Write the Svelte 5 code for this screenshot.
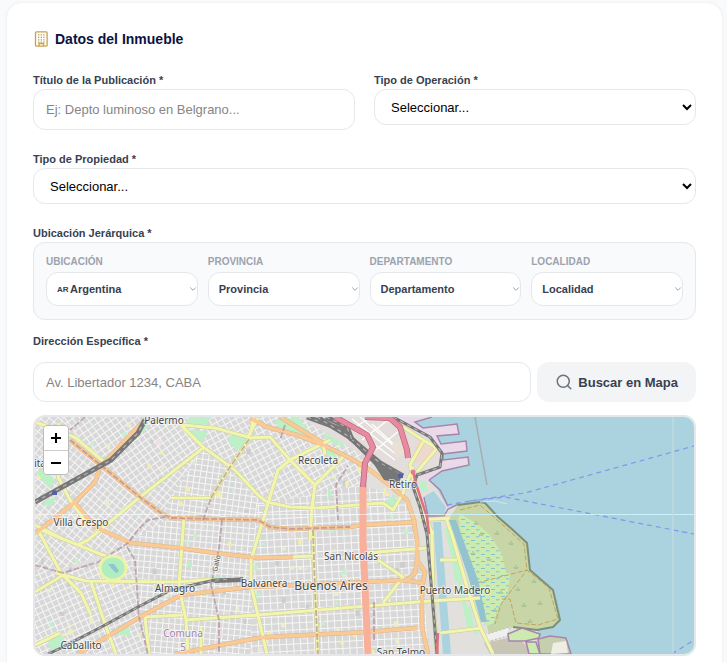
<script>
  let titulo = $state('');
  let operacion = $state('');
  let propiedad = $state('');
  let direccion = $state('');

  const niveles = [
    { id: 'pais', label: 'UBICACIÓN', placeholder: 'Argentina', prefix: 'AR' },
    { id: 'provincia', label: 'PROVINCIA', placeholder: 'Provincia' },
    { id: 'departamento', label: 'DEPARTAMENTO', placeholder: 'Departamento' },
    { id: 'localidad', label: 'LOCALIDAD', placeholder: 'Localidad' }
  ];

  // street grids, one per neighbourhood: size of a block and its angle
  const grids = [
    { id: 'villa-crespo', angle: 40, size: 6, area: '35,417 183,417 258,500 258,520 171,518 131,543 35,580' },
    { id: 'palermo', angle: 55, size: 6, area: '60,417 183,417 203,448 141,498 100,462' },
    { id: 'caballito', angle: -24, size: 6, area: '35,570 63,573 98,560 128,543 140,617 150,654 35,654' },
    { id: 'almagro', angle: 5, size: 6, area: '171,518 258,520 258,654 145,654 140,617 128,543' },
    { id: 'norte', angle: 62, size: 6, area: '183,417 305,417 373,462 363,485 363,505 290,507 258,495 203,448' },
    { id: 'recoleta', angle: 8, size: 6, area: '203,448 228,470 258,497 290,507 363,505 363,530 161,517 171,498' },
    { id: 'centro', angle: -3, size: 7, area: '257,505 363,485 407,500 417,530 430,654 250,654' }
  ];

  const parks = [
    '189,417 212,417 204,426 186,426', '184,430 208,431 203,441 196,441',
    '230,435 246,437 246,448 236,450 229,443', '275,420 298,417 316,440 298,434 278,428',
    '322,420 342,436 345,448 326,440', '318,448 340,450 334,460', '36,472 46,468 56,483 48,487',
    '45,500 56,497 52,506 44,505', '47,638 61,632 64,646 50,650', '118,630 128,623 131,636 117,635',
    '383,503 395,494 397,506 392,509', '140,428 148,424 143,434', '104,456 115,454 109,460',
    '418,478 425,475 428,493 421,490', '452,560 460,556 463,577 455,583', '464,610 471,606 474,627 467,627',
    '328,488 332,494 328,500', '188,563 192,560 192,567 187,567', '213,576 225,577 225,580 213,580'
  ];

  const yellow = [
    '35,422 58,430 76,438 103,461', '58,423 68,447 58,477 70,500 88,525', '203,448 140,497 88,540 78,545',
    '181,425 203,447 235,470 258,495 267,502 290,507 317,508 383,503 393,510 403,493 413,467',
    '183,425 215,428 248,437 258,418', '171,498 211,498 228,470 250,438 270,437 290,460 315,485 312,507 310,540',
    '330,440 290,460 278,470 267,507 257,540 251,560 251,585 267,654', '343,457 315,485',
    '184,516 183,530 179,587 186,620 188,654', '56,573 86,581 178,582 215,579', '91,582 106,627 116,654',
    '38,530 61,573 81,593 91,615', '35,592 65,574', '41,530 58,537 78,545 108,557',
    '145,617 183,615', '185,620 258,615 367,606 430,601 480,598', '201,627 201,654', '35,525 61,538',
    '35,645 60,633', '365,553 427,548', '378,560 403,577 383,603', '293,557 313,556',
    '250,435 254,417', '423,442 410,465 415,485 425,515 433,535', '397,423 423,440 437,448 417,472',
    '420,520 450,518', '432,530 433,600 437,654', '446,518 452,535 467,587 480,627 493,654',
    '440,560 457,560', '440,633 482,628', '145,617 149,654', '313,530 315,590 318,654', '323,443 325,455'
  ];

  const orange = [
    '145,420 135,430 100,467 95,482 75,502 36,533', '75,503 95,527 131,543 180,548 215,553 258,558 293,557',
    '250,418 267,427 297,435 323,445 350,458 370,470 393,488 407,500 413,517 417,540 417,560 425,572 423,583 403,580',
    '280,417 323,443', '417,560 415,573 407,580 367,582 250,587 181,595 140,617 78,654',
    '175,654 258,638 267,637 367,632 417,628', '422,583 422,627 428,654',
    '70,440 103,467 141,498 161,513 171,518 258,520 270,527 290,529 350,527 363,525 417,522'
  ];

  // barrio limits drawn over the avenues
  const limits = [
    '70,440 103,467 141,498 161,513 171,518 258,520 270,527 290,529 350,527',
    '35,565 63,573 98,562 128,543 138,530 148,520 165,517', '211,498 228,470 250,438',
    '203,520 211,498', '222,520 219,548 211,585 219,620 219,654', '127,547 135,560 139,617 148,654',
    '313,530 315,590 318,654', '338,520 336,485 348,466', '85,417 70,430', '285,425 280,440', '374,640 374,600'
  ];

  const motorways = [
    '335,417 367,435 373,447 365,463 363,487', '365,417 390,418 400,427 407,450 408,458'
  ];

  const rails = [
    '35,502 111,460 138,433 145,420', '307,417 343,430 373,460 393,480', '317,417 348,436 380,463 403,476',
    '326,417 347,427 352,440'
  ];

  const thinRails = [
    '48,654 61,648 105,625 138,607 171,590 215,580 243,579',
    '393,417 430,437 442,453 440,467 417,475 413,487 420,507 427,534 437,654'
  ];

  const places = [
    { x: 164, y: 424, name: 'Palermo' }, { x: 318, y: 464, name: 'Recoleta' },
    { x: 403, y: 488, name: 'Retiro' }, { x: 81, y: 526, name: 'Villa Crespo' },
    { x: 175, y: 592, name: 'Almagro' }, { x: 264, y: 587, name: 'Balvanera' },
    { x: 351, y: 560, name: 'San Nicolás' }, { x: 455, y: 594, name: 'Puerto Madero' },
    { x: 81, y: 649, name: 'Caballito' }, { x: 401, y: 656, name: 'San Telmo' },
    { x: 38, y: 467, name: 'rita' }
  ];

  const bushes = [
    [476, 525], [497, 535], [511, 545], [473, 555], [516, 569], [534, 583], [518, 591],
    [524, 607], [540, 605], [530, 623], [489, 561], [501, 594], [495, 612], [481, 536]
  ];

  // small plazas and buildings scattered between the streets
  const tones = ['#f5efa9', '#c4f2cf', '#f1e0e0', '#eeeecb', '#ccc'];
  let seed = 17;
  function next() {
    seed = (seed * 16807) % 2147483647;
    return seed / 2147483647;
  }
  const blocks = Array.from({ length: 170 }, () => ({
    x: 37 + next() * 372,
    y: 419 + next() * 232,
    w: 2 + next() * 3,
    h: 2 + next() * 4,
    fill: tones[Math.floor(next() * tones.length)]
  }));
</script>

<main class="card">
  <h2>
    <svg class="building" viewBox="0 0 16 16" aria-hidden="true">
      <rect x="2.5" y="0.8" width="11.6" height="14.4" rx="1" />
      <path d="M6 15v-2.5h4.6V15" />
      <path class="windows" d="M5 3.8h7.5M5 6.3h7.5M5 8.8h7.5M5 11.2h7.5" />
    </svg>
    Datos del Inmueble
  </h2>

  <div class="row">
    <div class="field">
      <label for="titulo">Título de la Publicación *</label>
      <input id="titulo" type="text" placeholder="Ej: Depto luminoso en Belgrano..." bind:value={titulo} />
    </div>
    <div class="field">
      <label for="operacion">Tipo de Operación *</label>
      <select id="operacion" bind:value={operacion}>
        <option value="">Seleccionar...</option>
        <option value="venta">Venta</option>
        <option value="alquiler">Alquiler</option>
      </select>
    </div>
  </div>

  <div class="field type">
    <label for="propiedad">Tipo de Propiedad *</label>
    <select id="propiedad" bind:value={propiedad}>
      <option value="">Seleccionar...</option>
      <option value="casa">Casa</option>
      <option value="depto">Departamento</option>
    </select>
  </div>

  <fieldset>
    <legend>Ubicación Jerárquica *</legend>
    <div class="levels">
      {#each niveles as nivel (nivel.id)}
        <div class="level">
          <label for={nivel.id}>{nivel.label}</label>
          <div class="picker" class:prefixed={nivel.prefix}>
            <select id={nivel.id}>
              <option>{nivel.placeholder}</option>
            </select>
            {#if nivel.prefix}<span>{nivel.prefix}</span>{/if}
            <svg viewBox="0 0 8 8" aria-hidden="true"><path d="M1.2 2.5L4 5.3l2.800-2.800" /></svg>
          </div>
        </div>
      {/each}
    </div>
  </fieldset>

  <div class="address">
    <label for="direccion">Dirección Específica *</label>
    <div class="search">
      <input id="direccion" type="text" placeholder="Av. Libertador 1234, CABA" bind:value={direccion} />
      <button type="button" class="find">
        <svg viewBox="0 0 24 24" aria-hidden="true"><circle cx="11" cy="11" r="8" /><path d="M21 21l-4.350-4.350" /></svg>
        Buscar en Mapa
      </button>
    </div>
  </div>

  <div class="map">
    <svg viewBox="35 417 659 237" preserveAspectRatio="xMidYMid slice" role="img" aria-label="Mapa de Buenos Aires">
      <defs>
        {#each grids as g (g.id)}
          <pattern id={g.id} width={g.size} height={g.size} patternUnits="userSpaceOnUse" patternTransform="rotate({g.angle})">
            <rect width={g.size} height={g.size} fill="#d8d8d8" />
            <path d="M0 0.500H{g.size}M0.500 0V{g.size}" stroke="#f6f6f6" />
          </pattern>
        {/each}
        <pattern id="marsh" width="10" height="7" patternUnits="userSpaceOnUse">
          <rect width="10" height="7" fill="#cdebb0" />
          <path d="M1 1.500h4M6 4.800h3.500" stroke="#7cc4d6" />
        </pattern>
      </defs>

      <rect x="35" y="417" width="659" height="237" fill="#e2e0dc" />
      {#each grids as g (g.id)}
        <polygon points={g.area} fill="url(#{g.id})" />
      {/each}
      {#each blocks as b}
        <rect x={b.x} y={b.y} width={b.w} height={b.h} fill={b.fill} />
      {/each}
      {#each parks as points}
        <polygon {points} fill="#bdf0c6" />
      {/each}

      <!-- Retiro yards and the port -->
      <polygon points="300,417 430,417 440,440 438,470 415,480 370,460" fill="#e3dedb" />
      <path class="yard" d="M345 422l50 38M352 419l45 36M360 417l42 36M372 424l28 26M350 430l20-12M362 440l26-20M376 450l24-20" />
      <polygon points="395,417 475,417 470,462 443,472 432,482 415,480 440,465 442,450 425,434" fill="#ead9e8" />
      <polygon points="418,436 440,449 427,463 412,462" fill="#f0d9cc" />
      <polygon points="392,444 404,438 406,455 396,458" fill="#eae0d4" />

      <!-- river -->
      <path
        class="water"
        d="M432 417L415 422 423 428 457 424 459 434 437 436 441 444 466 441 467 451 443 454 443 460 468 457 469 465 442 471 429 480 437 489 447 507 458 505 480 502 485 503 498 517 513 530 527 543 530 570 553 590 560 620 553 627 537 630 540 637 567 637 571 656H700V410H432z"
      />
      <path
        class="pier"
        d="M432 417L415 422 423 428 457 424 459 434 437 436 441 444 466 441 467 451 443 454 443 460 468 457 469 465 442 471 429 480"
      />
      <path class="water" d="M425 496l9-5 12 16-2 8-16 1z" />
      <path class="pier" d="M429 480l11 10 8 16M424 497l4 19h16l4-7 11-5" />
      <path class="water" d="M433 522h8l10 132h-8z" />

      <!-- reserva ecológica -->
      <path
        d="M449 519L458 505 480 502 485 503 498 517 513 530 527 543 530 570 553 590 560 620 553 627 537 630 513 627 489 634 474 575z"
        fill="#c8d5a7"
      />
      <path d="M458 513l18 10 14 12 12 19 3 15 5 5-2 18-10 17-5 15-8 2-10-44-14-40z" fill="url(#marsh)" />
      <path class="shore" d="M458 505L480 502 485 503 498 517 513 530 527 543 530 570 553 590 560 620 553 627 537 630 513 627" />
      <path class="trail" d="M460 510l20-5 16 14 28 25 3 26 22 18 9 31-20 6-22-2-6-24-8 0M477 583l50-13-26 34-6 20" />
      <path d="M449 520h7l22 60 9 42h-6l-13-46z" fill="#92c3cf" />
      <path d="M446 528l12 44 10 50 10 12" fill="none" stroke="#bdf0c6" stroke-width="4" />
      {#each bushes as [x, y]}
        <path class="bush" d="M{x} {y}v-4M{x - 1} {y}l-1-2M{x + 1} {y}l1-2" />
      {/each}
      <path d="M484 635l26-8-2 9-22 6z" fill="#efefef" stroke="#bbb" stroke-dasharray="2 2" />
      <path d="M484 643l24-5 14 3 10 13H490z" fill="#c8c5b4" />
      <path d="M508 634l14-6 18 6-1 4-14 3-16 0zM526 642h10l4 12h-11z" fill="#cdebb0" stroke="#a785ad" stroke-width="1.600" />
      <path d="M538 639l12-3 16 2 5 16h-31z" fill="#c5cfae" stroke="#a785ad" stroke-width="1.600" />
      <path d="M553 643l13-2 2 12-17 1z" fill="#f0ede4" />

      <!-- avenues -->
      {#each yellow as points}<polyline {points} class="case" />{/each}
      {#each orange as points}<polyline {points} class="case wide" />{/each}
      {#each yellow as points}<polyline {points} class="yellow" />{/each}
      {#each orange as points}<polyline {points} class="orange" />{/each}
      {#each limits as points}<polyline {points} class="limit" />{/each}
      <ellipse cx="113" cy="568" rx="13" ry="12" fill="#aeeec0" stroke="#eff2a4" stroke-width="3" />
      <path d="M108 564l6 0 5 7-3 2-4-4z" fill="#92c3cf" />

      {#each rails as points}
        <polyline {points} class="rail" />
        <polyline {points} class="rail sleepers" />
      {/each}
      {#each thinRails as points}
        <polyline {points} class="rail thin" />
        <polyline {points} class="rail thin sleepers" />
      {/each}
      <path d="M370 458l32 17-3 8-15-3z" fill="#777" />
      <path d="M213 582l30-5v5l-28 1z" fill="#777" />
      <polyline points="363,485 363,540 368,654" fill="none" stroke="#f8b09b" stroke-width="7" />
      {#each motorways as points}
        <polyline {points} class="motorway edge" />
        <polyline {points} class="motorway" />
      {/each}
      <polyline points="413,472 417,487 427,517 429,534" class="motorway slim" />
      <polyline points="438,633 437,654" class="motorway slim" />
      <circle cx="413" cy="472" r="2.500" fill="#e27d92" />
      <rect x="398" y="474" width="5" height="4" fill="#5660a8" />
      <rect x="52" y="491" width="5" height="4" fill="#5660a8" />

      <!-- ferries, breakwater and tile seams -->
      <path class="ferry" d="M447 505l23-4 55-8 169-47M470 501l35-4 189 37M672 654l22-14M673 530l21 4" />
      <path d="M475 417l12 68" stroke="#a9aeb0" stroke-width="1.500" />
      <path d="M480 502l15-1 12 3" fill="none" stroke="#d7e6e6" />
      <path d="M35 514.500H450" stroke="#fff" opacity="0.600" />
      <path d="M450 514.500H694" stroke="#c9f2fa" />
      <path d="M673 417V654" stroke="#bedbe2" stroke-width="1.500" />

      {#each places as p (p.name)}
        <text x={p.x} y={p.y}>{p.name}</text>
      {/each}
      <text x="331" y="590" class="city">Buenos Aires</text>
      <text x="183" y="637" class="comuna">Comuna</text>
      <text x="183" y="651" class="comuna">5</text>
      <text class="street" transform="translate(217 572) rotate(-78)">Gallo</text>
    </svg>
    <div class="zoom">
      <button type="button" aria-label="Acercar"><svg viewBox="0 0 12 12"><path d="M1 6h10M6 1v10" /></svg></button>
      <button type="button" aria-label="Alejar"><svg viewBox="0 0 12 12"><path d="M1 6h10" /></svg></button>
    </div>
  </div>
</main>

<style>
  :global(body) { background: #f9fafb; }
  .card {
    margin: 2px 4px 0 6px;
    padding: 24px 26px;
    background: #fff;
    border: 1px solid #f3f4f6;
    border-radius: 16px;
    box-shadow: 0 0 2px rgba(0, 0, 0, 0.05);
    font-family: "Liberation Sans", Arial, sans-serif;
  }
  h2 {
    display: flex;
    align-items: center;
    gap: 6px;
    margin: 0 0 21px;
    color: #0b1340;
    font-size: 14px;
    line-height: 24px;
  }
  .building {
    width: 16px;
    height: 16px;
    fill: none;
    stroke: #c9a050;
    stroke-width: 1.3;
  }
  .windows { stroke-width: 1.2; stroke-dasharray: 1.4 1.2; }
  label, legend {
    display: block;
    padding: 0;
    color: #374151;
    font-size: 11px;
    font-weight: 700;
    line-height: 16px;
  }
  .row {
    display: grid;
    grid-template-columns: 1fr 1fr;
    gap: 19px;
    margin-bottom: 21px;
  }
  .field { display: flex; flex-direction: column; gap: 1px; }
  .type { margin-bottom: 21px; }
  input, select {
    box-sizing: border-box;
    width: 100%;
    min-width: 0;
    margin: 0;
    padding: 0 12px;
    background: #fff;
    border: 1px solid #e5e7eb;
    border-radius: 12px;
    color: #000;
    font: 13px "Liberation Sans", Arial, sans-serif;
  }
  input { height: 41px; }
  input::placeholder { color: #858585; }
  select { height: 36px; }
  fieldset { margin: 0 0 13px; padding: 0; border: none; min-width: 0; }
  .levels {
    display: grid;
    grid-template-columns: repeat(4, 1fr);
    gap: 10px;
    margin-top: 1px;
    padding: 11px 12px 13px;
    background: #f9fafb;
    border: 1px solid #e5e7eb;
    border-radius: 12px;
  }
  .level { display: flex; flex-direction: column; gap: 2px; }
  .level label { color: #9ca3af; font-size: 10px; }
  .picker { display: grid; align-items: center; }
  .picker > * { grid-area: 1 / 1; }
  .picker select {
    height: 34px;
    padding: 0 10px;
    appearance: none;
    color: #374151;
    font-size: 11px;
    font-weight: 700;
  }
  .prefixed select { padding-left: 23px; }
  .picker span {
    padding-left: 11px;
    color: #374151;
    font-size: 8px;
    font-weight: 700;
    pointer-events: none;
  }
  .picker svg {
    justify-self: end;
    width: 8px;
    height: 8px;
    margin-right: 1px;
    fill: none;
    stroke: #9ca3af;
    pointer-events: none;
  }
  .address { display: grid; gap: 13px; margin-bottom: 13px; }
  .search { display: flex; gap: 6px; }
  .search input { flex: 1; height: 40px; }
  .find {
    display: flex;
    align-items: center;
    gap: 5px;
    padding: 0 18px;
    background: #f3f4f6;
    border: none;
    border-radius: 12px;
    color: #374151;
    font: 700 13px "Liberation Sans", Arial, sans-serif;
    white-space: nowrap;
  }
  .find svg {
    width: 18px;
    height: 18px;
    fill: none;
    stroke: #6b7280;
    stroke-width: 2;
    stroke-linecap: round;
  }
  .map {
    position: relative;
    height: 237px;
    border: 2px solid #e5e7eb;
    border-radius: 12px;
    overflow: hidden;
  }
  .map > svg { display: block; width: 100%; height: 100%; }
  polyline { fill: none; stroke-linejoin: round; }
  .water { fill: #aad3df; }
  .yard { fill: none; stroke: #fff; stroke-width: 1.2; }
  .pier { fill: none; stroke: #a785ad; stroke-width: 1.5; }
  .shore { fill: none; stroke: #7e8f78; stroke-width: 2; }
  .trail { fill: none; stroke: #c3a35c; stroke-dasharray: 5 2; }
  .bush { fill: none; stroke: #8db588; stroke-width: 0.8; }
  .case { stroke: #c9cba4; stroke-width: 4.2; }
  .case.wide { stroke: #d9b48c; stroke-width: 4.6; }
  .yellow { stroke: #f2f5ac; stroke-width: 3.2; }
  .orange { stroke: #f9ca96; stroke-width: 3.6; }
  .limit { stroke: #a97f94; stroke-width: 1.8; stroke-dasharray: 6 2; opacity: 0.6; }
  .rail { stroke: #777; stroke-width: 5; }
  .rail.thin { stroke-width: 3; }
  .rail.sleepers { stroke: #b5b5b5; stroke-width: 1.2; stroke-dasharray: 4 4; }
  .motorway { stroke: #e58da0; stroke-width: 4.5; }
  .motorway.edge { stroke: #c65f7a; stroke-width: 6; }
  .motorway.slim { stroke: #dd6f88; stroke-width: 2.5; }
  .ferry { fill: none; stroke: #8495ec; stroke-width: 1.2; stroke-dasharray: 5 4; }
  .map text {
    fill: #484848;
    stroke: rgba(255, 255, 255, 0.6);
    stroke-width: 2;
    paint-order: stroke;
    font-family: "Noto Sans", sans-serif;
    font-size: 10px;
    text-anchor: middle;
  }
  .map .city { font-size: 12px; }
  .map .comuna { fill: #a583ac; }
  .map .street { font-size: 7px; text-anchor: start; }
  .zoom {
    position: absolute;
    top: 8px;
    left: 8px;
    display: flex;
    flex-direction: column;
    border: 1px solid #bbb;
    border-radius: 4px;
    overflow: hidden;
  }
  .zoom button {
    display: grid;
    place-items: center;
    width: 24px;
    height: 24px;
    padding: 0;
    background: #fff;
    border: none;
  }
  .zoom button + button { border-top: 1px solid #ccc; }
  .zoom svg { width: 12px; height: 12px; stroke: #000; stroke-width: 2; }
</style>
